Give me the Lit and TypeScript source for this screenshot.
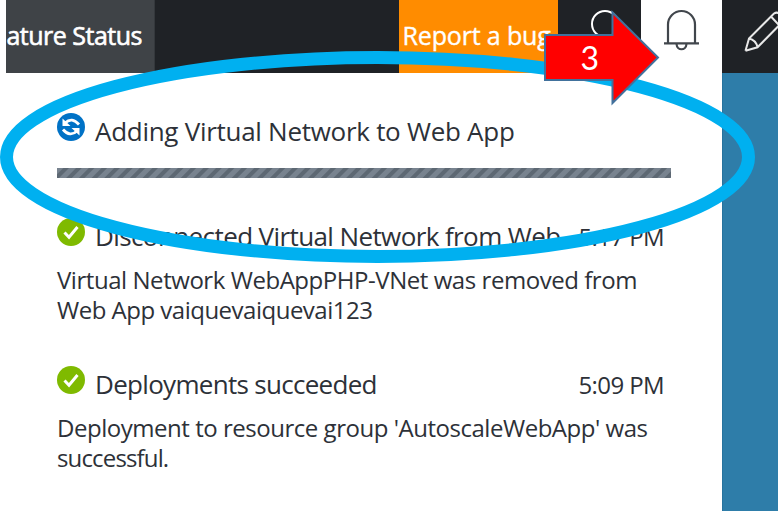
import { LitElement, html, css, svg } from "lit";
import { customElement } from "lit/decorators.js";

const check = svg`<circle cx="14" cy="14" r="14" fill="#7fba00"/><path d="M7.500 14.500L12 19.200L20.500 9" fill="none" stroke="#fff" stroke-width="3"/>`;
const sync = svg`<circle cx="14" cy="14" r="14" fill="#0072c6"/>
  <path d="M8 10Q15 3.500 22 11.500M20 18Q13 24.500 6 16.500" fill="none" stroke="#fff" stroke-width="2.800"/>
  <path d="M5.500 5.500V13H13.500ZM22.500 22.500V15H14.500Z" fill="#fff"/>`;

@customElement("app-root")
export class AppRoot extends LitElement {
  static styles = css`
    :host { display: block; position: relative; width: 778px; height: 511px; overflow: hidden; background: #fff; color: #2d3138; font-family: "Open Sans", "Noto Sans", sans-serif; }
    * { box-sizing: border-box; }
    svg { display: block; }
    .bar { display: flex; height: 72.5px; margin-left: 6px; background: #1f2226; color: #fff; }
    .bar div { white-space: nowrap; flex: none; }
    .status { width: 149px; background: #3f4347; border-right: 1px solid #34383c; font-size: 25px; -webkit-text-stroke: 0.6px #fff; line-height: 70px; display: flex; justify-content: flex-end; padding-right: 12px; letter-spacing: -0.5px; }
    .gap { width: 244px; }
    .bug { width: 159px; background: #ff8c00; font-size: 25px; -webkit-text-stroke: 0.4px #fff; line-height: 70px; padding-left: 3.5px; letter-spacing: -0.15px; }
    .search { width: 83px; }
    .bell { width: 81px; background: #fff; }
    .edit { width: 56px; }
    .body { display: flex; height: 438.5px; }
    .list { width: 722px; padding: 40.5px 51px 0 57px; }
    .side { flex: 1; background: #2e7da9; border-left: 1px solid #27739e; }
    .row { display: flex; height: 38px; font-size: 26px; line-height: 37px; white-space: nowrap; }
    .row svg { flex: none; margin-right: 10px; }
    .time { margin-left: auto; margin-right: 7px; font-size: 24px; letter-spacing: -0.6px; }
    .progress { height: 10px; margin-top: 17px; background: repeating-linear-gradient(135deg, #78838f 0 4px, #5d6873 5px 8px, #78838f 9px); }
    .second { margin-top: 40px; }
    .third { margin-top: 40.5px; }
    .text { font-size: 24px; line-height: 30px; white-space: nowrap; margin-top: 9px; }
    .t1 { letter-spacing: -0.28px; }
    .t2 { letter-spacing: -0.6px; }
    .t3 { letter-spacing: -0.7px; }
    .l1, .l2, .l3, .l4 { display: block; width: max-content; letter-spacing: -0.45px; }
    .l2 { letter-spacing: -0.5px; }
    .l3 { letter-spacing: -0.47px; }
    .l4 { letter-spacing: -0.85px; }
    .over { position: absolute; left: 0; top: 0; }
    .num { font: 32px Lato, sans-serif; fill: #fff; }
  `;

  render() {
    return html`
      <div class="bar">
        <div class="status"><span>ature Status</span></div>
        <div class="gap"></div>
        <div class="bug">Report a bug</div>
        <div class="search"><svg width="83" height="72" viewBox="558 0 83 72"><circle cx="605" cy="24" r="13" fill="none" stroke="#fff" stroke-width="2"/></svg></div>
        <div class="bell"><svg width="81" height="72" viewBox="641 0 81 72" fill="none" stroke="#41464c" stroke-width="2.200"><path d="M668 43V24.500A13.500 13.500 0 0 1 695 24.500V43M664 43.300H699M676.500 44C677 51 686 51 686.500 44"/></svg></div>
        <div class="edit"><svg width="56" height="72" viewBox="722 0 56 72" fill="none" stroke="#e8e8e8" stroke-width="2"><path d="M745.500 50.800L749 38.500L774 13.500Q777 11.500 780 14M745.500 50.800L757.500 47.300L780 24.500M749 38.500Q756 40 757.500 47.300M771 16.500L779 25"/></svg></div>
      </div>
      <div class="body">
        <div class="list">
          <div class="row"><svg width="28" height="28">${sync}</svg><span class="t1">Adding Virtual Network to Web App</span></div>
          <div class="progress"></div>
          <div class="row second"><svg width="28" height="28">${check}</svg><span class="t2">Disconnected Virtual Network from Web</span><span class="time">5:17 PM</span></div>
          <div class="text"><span class="l1">Virtual Network WebAppPHP-VNet was removed from</span><span class="l2">Web App vaiquevaiquevai123</span></div>
          <div class="row third"><svg width="28" height="28">${check}</svg><span class="t3">Deployments succeeded</span><span class="time">5:09 PM</span></div>
          <div class="text"><span class="l3">Deployment to resource group 'AutoscaleWebApp' was</span><span class="l4">successful.</span></div>
        </div>
        <div class="side"></div>
      </div>
      <svg class="over" width="778" height="511">
        <ellipse cx="377.500" cy="157" rx="371" ry="99.500" fill="none" stroke="#00b0f0" stroke-width="13"/>
        <path d="M545 35H612.500V12.500L658 57.500L612.500 103V80H545Z" fill="#f00" stroke="#41719c" stroke-width="2"/>
        <text class="num" x="580.500" y="69.500">3</text>
      </svg>`;
  }
}
